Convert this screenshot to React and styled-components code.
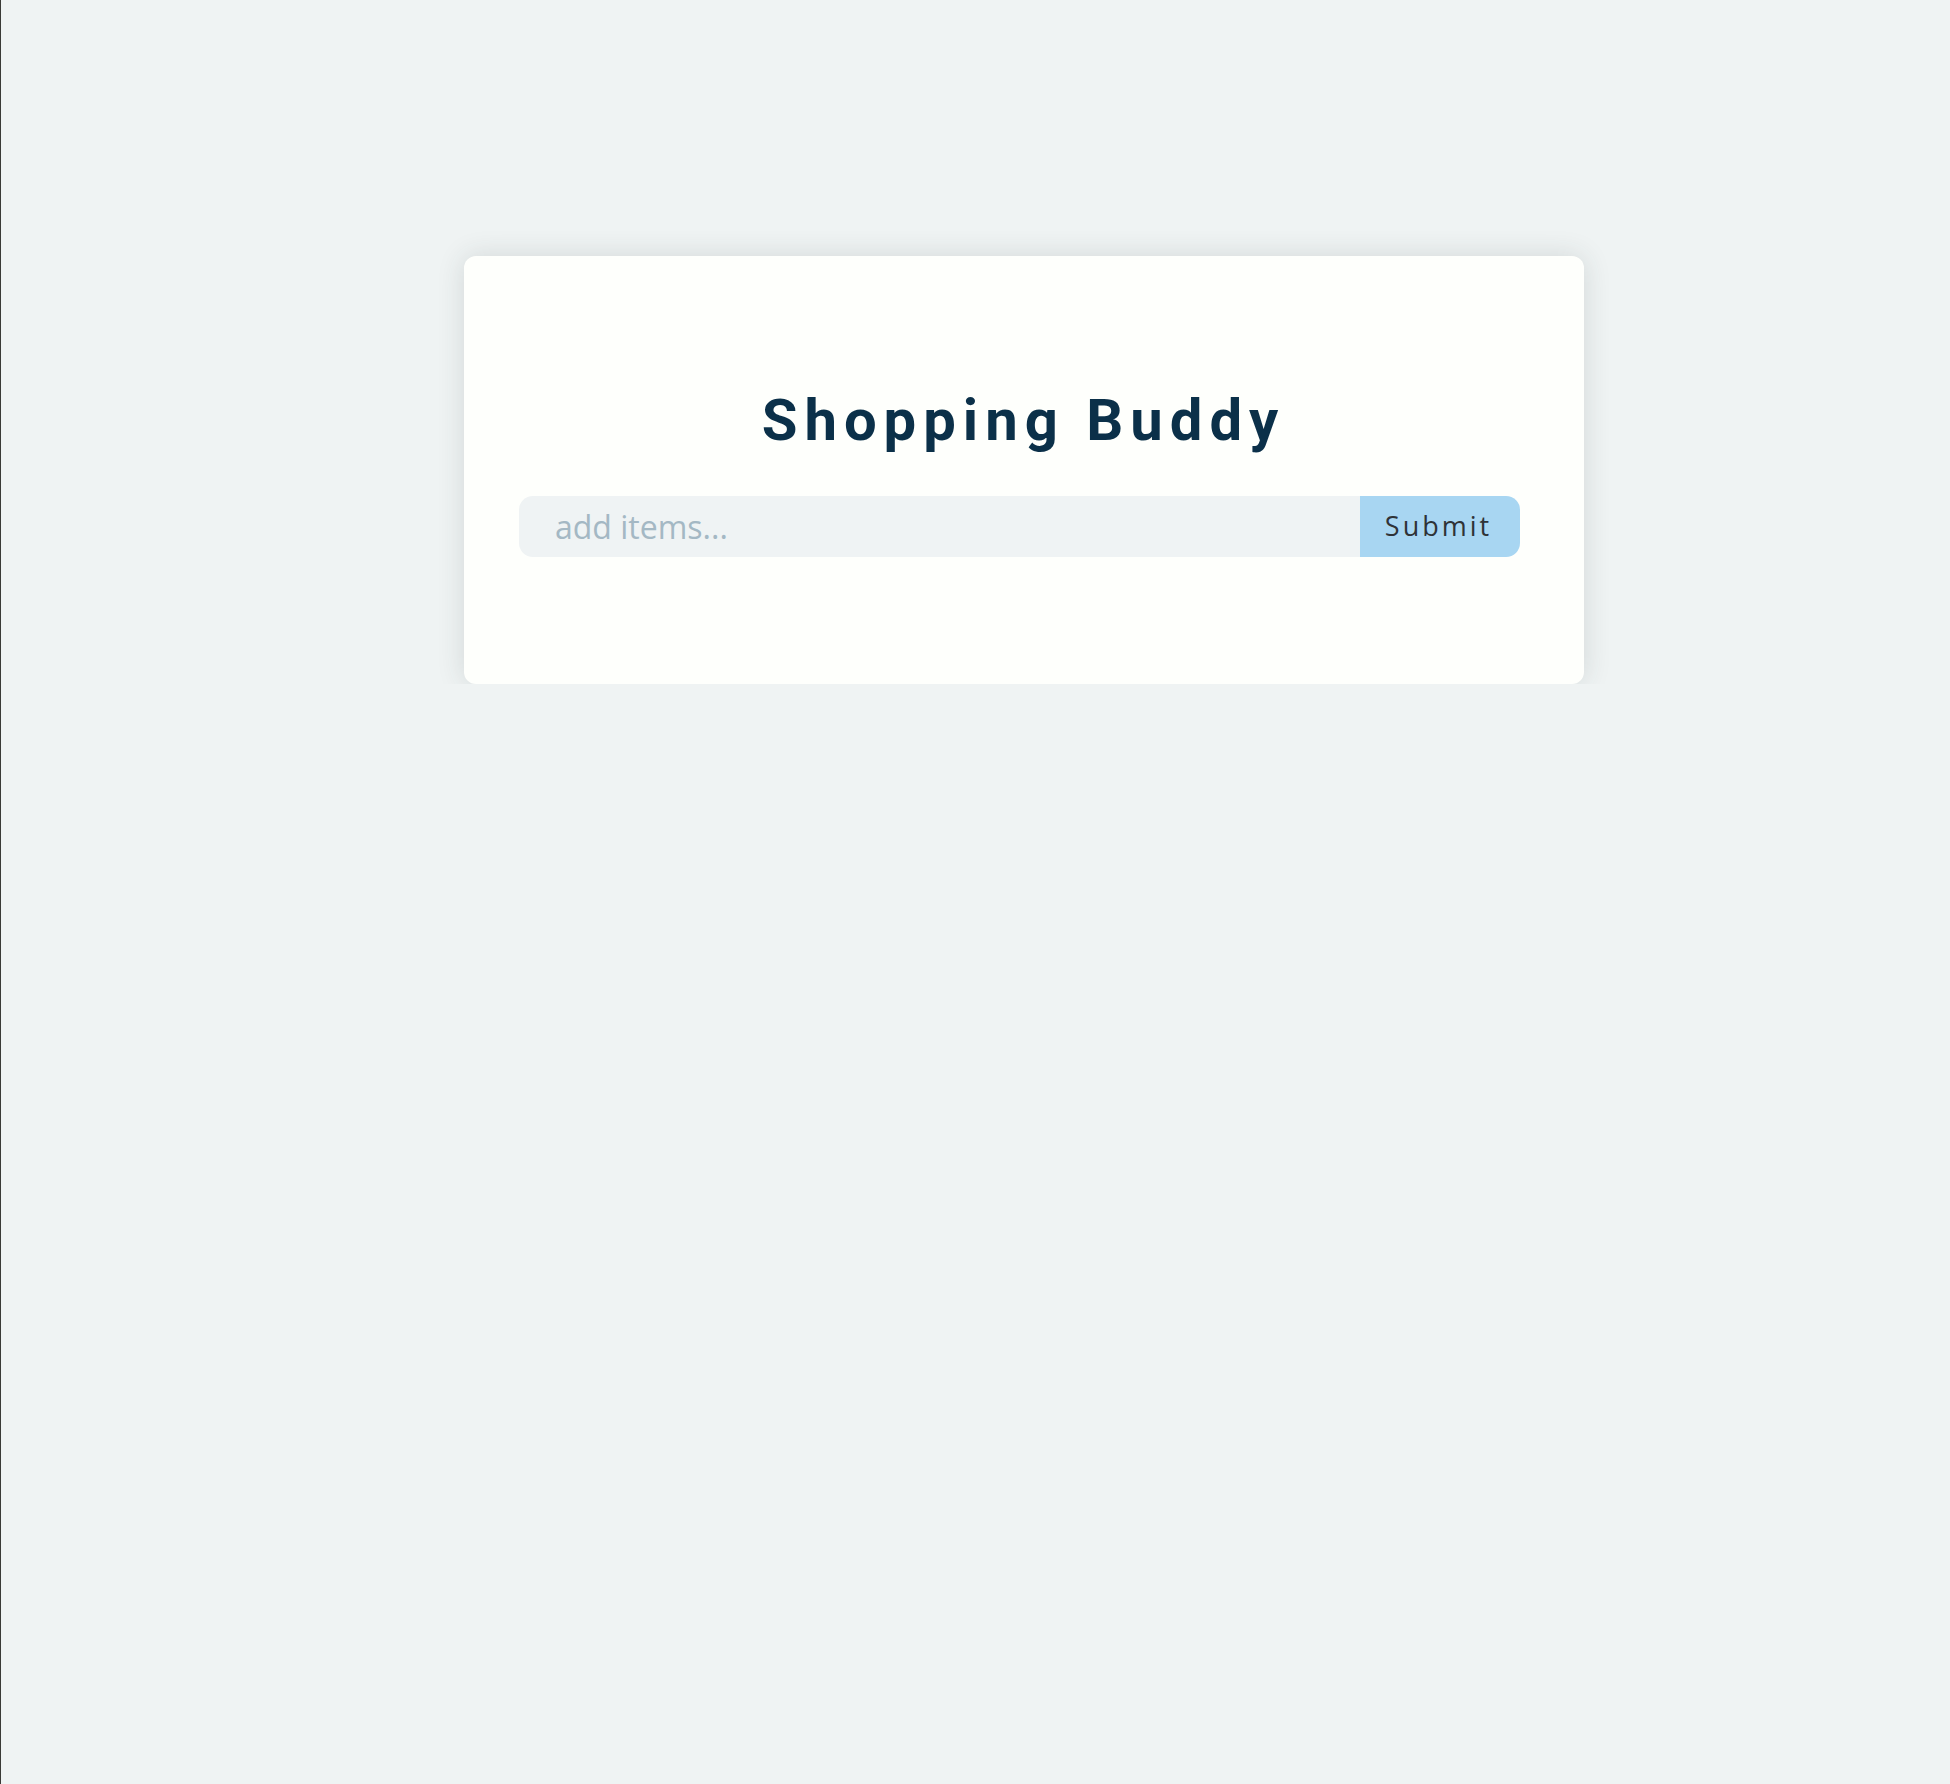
import React from "react";
import styled, { createGlobalStyle } from "styled-components";

const Global = createGlobalStyle`
  html, body { margin: 0; padding: 0; background: #eff3f3; }
  * { box-sizing: border-box; }
`;

const Page = styled.div`
  min-height: 100vh;
  border-left: 1px solid #3a3a36;
  background: #eff3f3;
  padding: 216px 0 0 423px;
`;

const ShadowClip = styled.div`
  width: 1200px;
  padding: 40px 40px 0;
  overflow: hidden;
`;

const Card = styled.section`
  width: 1120px;
  background: #fefffc;
  border-radius: 12px;
  box-shadow: 0 0 28px rgba(40, 60, 60, 0.14);
  padding: 130px 64px 127px 55px;
  display: flex;
  flex-direction: column;
  gap: 42px;
`;

const Title = styled.h1`
  margin: 0;
  text-align: center;
  font-family: Roboto, "Liberation Sans", sans-serif;
  font-weight: 700;
  font-size: 58px;
  line-height: normal;
  letter-spacing: 7px;
  color: #0b3049;
  padding-left: 8px;
`;

const Form = styled.form`
  display: flex;
  height: 61px;
`;

const Input = styled.input`
  flex: 1;
  min-width: 0;
  border: none;
  outline: none;
  background: #eff3f4;
  border-radius: 14px 0 0 14px;
  padding: 0 0 0 36px;
  font-family: "Open Sans", "Noto Sans", sans-serif;
  font-size: 32px;
  color: #334;
  &::placeholder {
    color: #a4b8c4;
  }
`;

const Button = styled.button`
  width: 160px;
  border: none;
  background: #a8d6f2;
  border-radius: 0 14px 14px 0;
  font-family: "Open Sans", "Noto Sans", sans-serif;
  font-size: 27px;
  letter-spacing: 3px;
  color: #2f3337;
  padding: 0 3px 2px 0;
  cursor: pointer;
`;

export default function App() {
  return (
    <>
      <Global />
      <Page>
        <ShadowClip>
          <Card>
            <Title>Shopping Buddy</Title>
            <Form onSubmit={(e) => e.preventDefault()}>
              <Input placeholder="add items..." />
              <Button type="submit">Submit</Button>
            </Form>
          </Card>
        </ShadowClip>
      </Page>
    </>
  );
}
